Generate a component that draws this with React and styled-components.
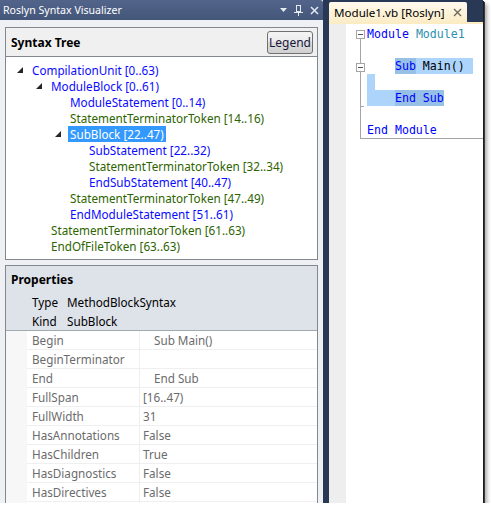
import React from "react";
import styled, { createGlobalStyle } from "styled-components";

const GlobalStyle = createGlobalStyle`
  html, body {
    margin: 0;
    padding: 0;
    background: #ffffff;
  }
  body {
    font-family: "Noto Sans", "DejaVu Sans", sans-serif;
    font-size: 11.7px;
  }
`;

const Frame = styled.div`
  width: 483px;
  height: 503px;
  display: flex;
  overflow: hidden;
  background: #293955;
  box-shadow: 1px 1px 0 #1c1c1c, 2px 2px 0 #3a3a3a, 4px 4px 4px rgba(0, 0, 0, 0.35);
`;

const ToolWindow = styled.div`
  width: 323px;
  display: flex;
  flex-direction: column;
  background: #eef0f3;
`;

const TitleBar = styled.div`
  height: 20px;
  flex: none;
  display: flex;
  align-items: center;
  justify-content: space-between;
  padding: 0 4px 0 3px;
  background: linear-gradient(#52648a, #44577a);
  border-radius: 0 3px 0 0;
  color: #ffffff;
  font-size: 10.6px;
`;

const TitleButtons = styled.div`
  display: flex;
  align-items: center;
  gap: 7px;
  color: #e4e9f2;
`;

const Body = styled.div`
  flex: 1;
  min-height: 0;
  display: flex;
  flex-direction: column;
  gap: 5px;
  padding: 7px 5px 0 5px;
`;

const TreePanel = styled.div`
  height: 233px;
  flex: none;
  box-sizing: border-box;
  border: 1px solid #828790;
  background: #ffffff;
  display: flex;
  flex-direction: column;
`;

const PanelHeader = styled.div`
  height: 28px;
  flex: none;
  display: flex;
  align-items: center;
  justify-content: space-between;
  padding: 0 4px 0 5px;
  background: #f0f0f0;
  border-bottom: 1px solid #828790;
  font-weight: bold;
  font-size: 12px;
  color: #000;
`;

const LegendButton = styled.button`
  height: 23px;
  width: 46px;
  padding: 0;
  border: 1px solid #707070;
  border-radius: 3px;
  background: linear-gradient(#f4f4f4, #ebebeb 50%, #dddddd 50%, #d0d0d0);
  font-family: inherit;
  font-size: 12px;
  color: #16163a;
`;

const TreeList = styled.div`
  padding-top: 5px;
`;

const TreeRow = styled.div`
  height: 16px;
  display: flex;
  align-items: center;
  padding-left: ${(p) => 11 + p.level * 19}px;
`;

const Expander = styled.span`
  width: 15px;
  flex: none;
  display: flex;
  align-items: center;
`;

const NodeLabel = styled.span`
  height: 16px;
  line-height: 16px;
  padding: 0 2px;
  margin-left: -2px;
  white-space: nowrap;
  color: ${(p) => (p.selected ? "#ffffff" : p.token ? "#2d6400" : "#0a0aff")};
  background: ${(p) => (p.selected ? "#3399ff" : "transparent")};
`;

const PropsPanel = styled.div`
  flex: 1;
  min-height: 0;
  border: 1px solid #828790;
  border-bottom: none;
  background: #ffffff;
  overflow: hidden;
`;

const PropsHeader = styled.div`
  height: 65px;
  box-sizing: border-box;
  padding: 5px 0 0 5px;
  background: #dee2e9;
  border-bottom: 1px solid #a3a8b1;
`;

const PropsTitle = styled.div`
  line-height: 18px;
  font-weight: bold;
  font-size: 12px;
  margin-bottom: 4px;
`;

const InfoRow = styled.div`
  display: flex;
  line-height: 19px;
  padding-left: 21px;
`;

const InfoLabel = styled.span`
  width: 35px;
`;

const GridRow = styled.div`
  display: grid;
  grid-template-columns: 21px 113px 1fr;
  height: 19px;
  line-height: 18px;
  color: #6b6b6b;
`;

const Gutter = styled.div`
  background: #f7f7f7;
`;

const NameCell = styled.div`
  padding-left: 5px;
  border-right: 1px solid #efefef;
  border-bottom: 1px solid #efefef;
  white-space: nowrap;
`;

const ValueCell = styled.div`
  padding-left: ${(p) => (p.indent ? 14 : 3)}px;
  border-bottom: 1px solid #efefef;
  white-space: nowrap;
`;

const DocArea = styled.div`
  flex: 1;
  margin-left: 6px;
  padding-top: 2px;
  display: flex;
  flex-direction: column;
`;

const Tab = styled.div`
  width: 138px;
  height: 20px;
  box-sizing: border-box;
  display: flex;
  align-items: center;
  justify-content: space-between;
  padding: 0 5px 0 5px;
  background: linear-gradient(#fffaee, #fcedc8);
  border-radius: 2px 2px 0 0;
  color: #000;
  font-size: 11.6px;
`;

const TabEdge = styled.div`
  height: 2px;
  background: #fcecc4;
`;

const Editor = styled.div`
  flex: 1;
  display: flex;
  background: #ffffff;
`;

const SelectionMargin = styled.div`
  width: 17px;
  background: #eeeeee;
`;

const CodeArea = styled.div`
  flex: 1;
  padding-top: 2px;
  display: flex;
  align-items: flex-start;
`;

const Lines = styled.div`
  flex: 1;
  border-bottom: 1px solid #a5a5a5;
  font-family: "DejaVu Sans Mono", "Liberation Mono", monospace;
  font-size: 11.6px;
`;

const CodeLine = styled.div`
  height: 16px;
  line-height: 16px;
  white-space: pre;
  color: #000;
`;

const Kw = styled.span`
  color: #0000ff;
`;

const TypeName = styled.span`
  color: #2b91af;
`;

const Hl = styled.span`
  display: inline-block;
  height: 16px;
  vertical-align: top;
  background: ${(p) => (p.dark ? "#97c0e6" : "#add5fb")};
  width: ${(p) => (p.w ? `${p.w}px` : "auto")};
`;

const Triangle = () => (
  <svg width="6" height="6" viewBox="0 0 6 6">
    <polygon points="6,0 6,6 0,6" fill="#262626" />
  </svg>
);

const treeData = [
  { level: 0, text: "CompilationUnit [0..63)", open: true },
  { level: 1, text: "ModuleBlock [0..61)", open: true },
  { level: 2, text: "ModuleStatement [0..14)" },
  { level: 2, text: "StatementTerminatorToken [14..16)", token: true },
  { level: 2, text: "SubBlock [22..47)", open: true, selected: true },
  { level: 3, text: "SubStatement [22..32)" },
  { level: 3, text: "StatementTerminatorToken [32..34)", token: true },
  { level: 3, text: "EndSubStatement [40..47)" },
  { level: 2, text: "StatementTerminatorToken [47..49)", token: true },
  { level: 2, text: "EndModuleStatement [51..61)" },
  { level: 1, text: "StatementTerminatorToken [61..63)", token: true },
  { level: 1, text: "EndOfFileToken [63..63)", token: true },
];

const properties = [
  ["Begin", "Sub Main()", true],
  ["BeginTerminator", ""],
  ["End", "End Sub", true],
  ["FullSpan", "[16..47)"],
  ["FullWidth", "31"],
  ["HasAnnotations", "False"],
  ["HasChildren", "True"],
  ["HasDiagnostics", "False"],
  ["HasDirectives", "False"],
];

const OutlineMargin = () => (
  <svg width="21" height="113" viewBox="0 0 21 113" style={{ flex: "none" }}>
    <g stroke="#a5a5a5" strokeWidth="1" fill="none" shapeRendering="crispEdges">
      <line x1="14.5" y1="12" x2="14.5" y2="112.5" />
      <line x1="14.5" y1="112.5" x2="21" y2="112.5" />
      <line x1="14.5" y1="80.5" x2="18" y2="80.5" />
      <rect x="10.5" y="4.5" width="8" height="8" fill="#fff" />
      <rect x="10.5" y="37.5" width="8" height="8" fill="#fff" />
      <line x1="12" y1="8.5" x2="17" y2="8.5" stroke="#555" />
      <line x1="12" y1="41.5" x2="17" y2="41.5" stroke="#555" />
    </g>
  </svg>
);

export default function App() {
  return (
    <>
      <GlobalStyle />
      <Frame>
        <ToolWindow>
          <TitleBar>
            <span>Roslyn Syntax Visualizer</span>
            <TitleButtons>
              <svg width="7" height="4" viewBox="0 0 7 4">
                <polygon points="0,0 7,0 3.5,4" fill="currentColor" />
              </svg>
              <svg width="9" height="11" viewBox="0 0 9 11">
                <g stroke="currentColor" fill="none" shapeRendering="crispEdges">
                  <rect x="2.5" y="0.5" width="4" height="6" />
                  <line x1="0" y1="7.5" x2="9" y2="7.5" />
                  <line x1="4.5" y1="8" x2="4.5" y2="11" />
                </g>
              </svg>
              <svg width="9" height="9" viewBox="0 0 9 9">
                <path d="M1 1L8 8M8 1L1 8" stroke="currentColor" strokeWidth="1.5" />
              </svg>
            </TitleButtons>
          </TitleBar>
          <Body>
            <TreePanel>
              <PanelHeader>
                <span>Syntax Tree</span>
                <LegendButton>Legend</LegendButton>
              </PanelHeader>
              <TreeList>
                {treeData.map((n, i) => (
                  <TreeRow key={i} level={n.level}>
                    <Expander>{n.open && <Triangle />}</Expander>
                    <NodeLabel token={n.token} selected={n.selected}>
                      {n.text}
                    </NodeLabel>
                  </TreeRow>
                ))}
              </TreeList>
            </TreePanel>
            <PropsPanel>
              <PropsHeader>
                <PropsTitle>Properties</PropsTitle>
                <InfoRow>
                  <InfoLabel>Type</InfoLabel>
                  <span>MethodBlockSyntax</span>
                </InfoRow>
                <InfoRow>
                  <InfoLabel>Kind</InfoLabel>
                  <span>SubBlock</span>
                </InfoRow>
              </PropsHeader>
              {properties.map(([name, value, indent]) => (
                <GridRow key={name}>
                  <Gutter />
                  <NameCell>{name}</NameCell>
                  <ValueCell indent={indent}>{value}</ValueCell>
                </GridRow>
              ))}
              <GridRow>
                <Gutter />
                <NameCell />
                <ValueCell />
              </GridRow>
            </PropsPanel>
          </Body>
        </ToolWindow>
        <DocArea>
          <Tab>
            <span>Module1.vb [Roslyn]</span>
            <svg width="9" height="9" viewBox="0 0 9 9">
              <path d="M1 1L8 8M8 1L1 8" stroke="#6e6a58" strokeWidth="1.4" />
            </svg>
          </Tab>
          <TabEdge />
          <Editor>
            <SelectionMargin />
            <CodeArea>
              <OutlineMargin />
              <Lines>
                <CodeLine>
                  <Kw>Module</Kw> <TypeName>Module1</TypeName>
                </CodeLine>
                <CodeLine> </CodeLine>
                <CodeLine>
                  {"    "}
                  <Hl dark>
                    <Kw>Sub</Kw>
                  </Hl>
                  <Hl> Main()</Hl>
                  <Hl w={8} />
                </CodeLine>
                <CodeLine>
                  <Hl w={8} />
                </CodeLine>
                <CodeLine>
                  <Hl>{"    "}</Hl>
                  <Hl dark>
                    <Kw>End Sub</Kw>
                  </Hl>
                </CodeLine>
                <CodeLine> </CodeLine>
                <CodeLine>
                  <Kw>End Module</Kw>
                </CodeLine>
              </Lines>
            </CodeArea>
          </Editor>
        </DocArea>
      </Frame>
    </>
  );
}
